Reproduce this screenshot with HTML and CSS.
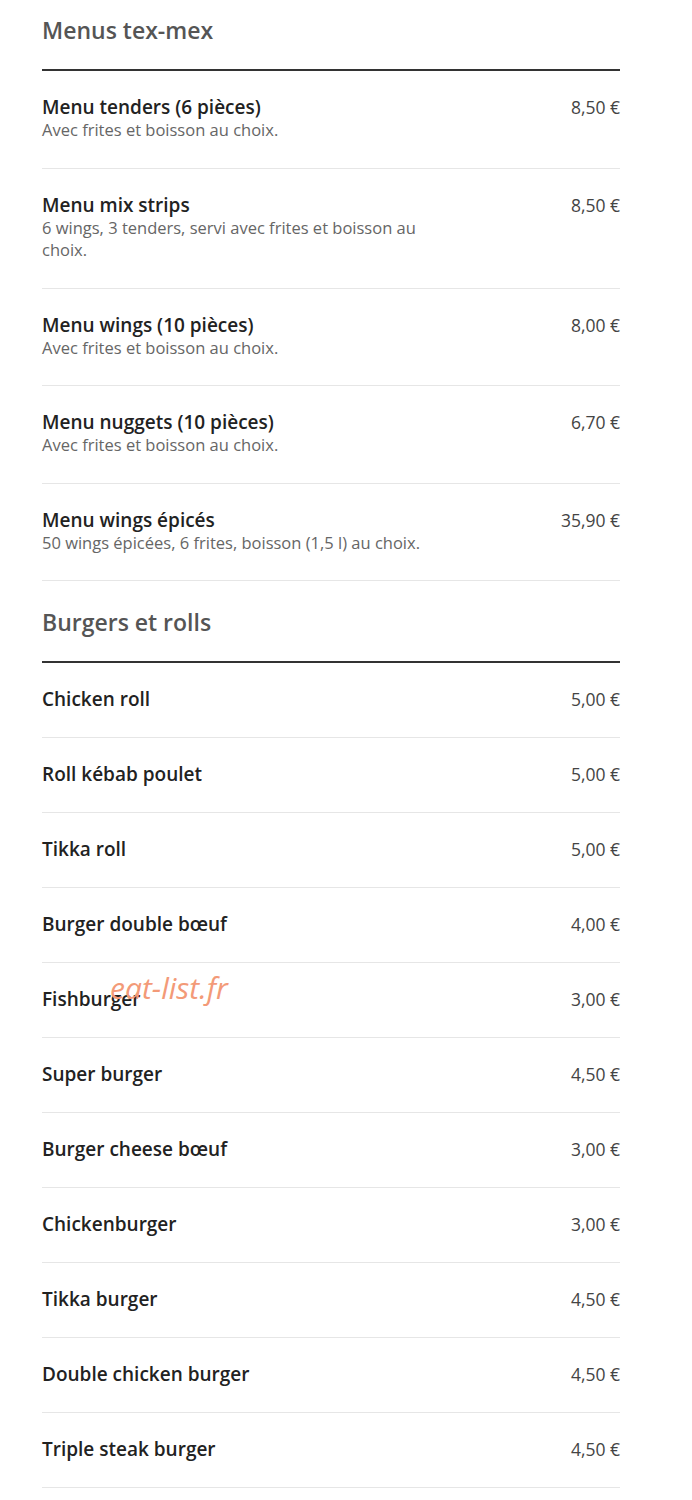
FILE: index.html
```html
<!DOCTYPE html>
<html lang="fr">
<head>
  <meta charset="UTF-8" />
  <meta name="viewport" content="width=device-width, initial-scale=1.0"/>
  <title>Carte - Menus</title>
  <link rel="stylesheet" href="styles.css">
</head>
<body>

  <div class="menu-page">
    <section class="menu-section">
      <h2>Menus tex-mex</h2>
      <ul class="items">
        <li>
          <div class="item-left">
            <div class="name">Menu tenders (6 pièces)</div>
            <div class="desc">Avec frites et boisson au choix.</div>
          </div>
          <div class="price">8,50 €</div>
        </li>
        <li>
          <div class="item-left">
            <div class="name">Menu mix strips</div>
            <div class="desc">6 wings, 3 tenders, servi avec frites et boisson au choix.</div>
          </div>
          <div class="price">8,50 €</div>
        </li>
        <li>
          <div class="item-left">
            <div class="name">Menu wings (10 pièces)</div>
            <div class="desc">Avec frites et boisson au choix.</div>
          </div>
          <div class="price">8,00 €</div>
        </li>
        <li>
          <div class="item-left">
            <div class="name">Menu nuggets (10 pièces)</div>
            <div class="desc">Avec frites et boisson au choix.</div>
          </div>
          <div class="price">6,70 €</div>
        </li>
        <li>
          <div class="item-left">
            <div class="name">Menu wings épicés</div>
            <div class="desc">50 wings épicées, 6 frites, boisson (1,5 l) au choix.</div>
          </div>
          <div class="price">35,90 €</div>
        </li>
      </ul>
    </section>

    <section class="menu-section">
      <h2>Burgers et rolls</h2>
      <ul class="items">
        <li><div class="item-left"><div class="name">Chicken roll</div></div><div class="price">5,00 €</div></li>
        <li><div class="item-left"><div class="name">Roll kébab poulet</div></div><div class="price">5,00 €</div></li>
        <li><div class="item-left"><div class="name">Tikka roll</div></div><div class="price">5,00 €</div></li>
        <li><div class="item-left"><div class="name">Burger double bœuf</div></div><div class="price">4,00 €</div></li>
        <li class="has-mark">
          <div class="item-left"><div class="name">Fishburger</div></div>
          <div class="price">3,00 €</div>
          <span class="watermark">eat-list.fr</span>
        </li>
        <li><div class="item-left"><div class="name">Super burger</div></div><div class="price">4,50 €</div></li>
        <li><div class="item-left"><div class="name">Burger cheese bœuf</div></div><div class="price">3,00 €</div></li>
        <li><div class="item-left"><div class="name">Chickenburger</div></div><div class="price">3,00 €</div></li>
        <li><div class="item-left"><div class="name">Tikka burger</div></div><div class="price">4,50 €</div></li>
        <li><div class="item-left"><div class="name">Double chicken burger</div></div><div class="price">4,50 €</div></li>
        <li><div class="item-left"><div class="name">Triple steak burger</div></div><div class="price">4,50 €</div></li>
      </ul>
    </section>
  </div>

</body>
</html>
```

FILE: styles.css
```css
* {
  margin: 0;
  padding: 0;
  box-sizing: border-box;
}

body {
  background: #fff;
  font-family: "Open Sans", "Liberation Sans", sans-serif;
  color: #222;
}

.menu-page {
  width: 578px;
  margin-left: 42px;
}

.menu-section h2 {
  font-size: 23px;
  font-weight: 600;
  line-height: 30px;
  color: #555;
  padding: 15px 0 24px;
  border-bottom: 2px solid #333;
}

.menu-section + .menu-section h2 {
  padding-top: 26px;
}

.items {
  list-style: none;
}

.items li {
  display: flex;
  justify-content: space-between;
  align-items: flex-start;
  padding: 24px 0 26px;
  border-bottom: 1px solid #e6e6e6;
}

.item-left {
  max-width: 400px;
}

.name {
  font-size: 19px;
  font-weight: 600;
  line-height: 24px;
  color: #222;
}

.desc {
  font-size: 16.5px;
  line-height: 22.5px;
  color: #666;
}

.price {
  font-size: 17.5px;
  line-height: 24px;
  color: #444;
  white-space: nowrap;
}

.has-mark {
  position: relative;
}

.watermark {
  position: absolute;
  left: 68px;
  top: 7px;
  font-size: 30px;
  line-height: 36px;
  font-style: italic;
  color: #f39a78;
}
```
